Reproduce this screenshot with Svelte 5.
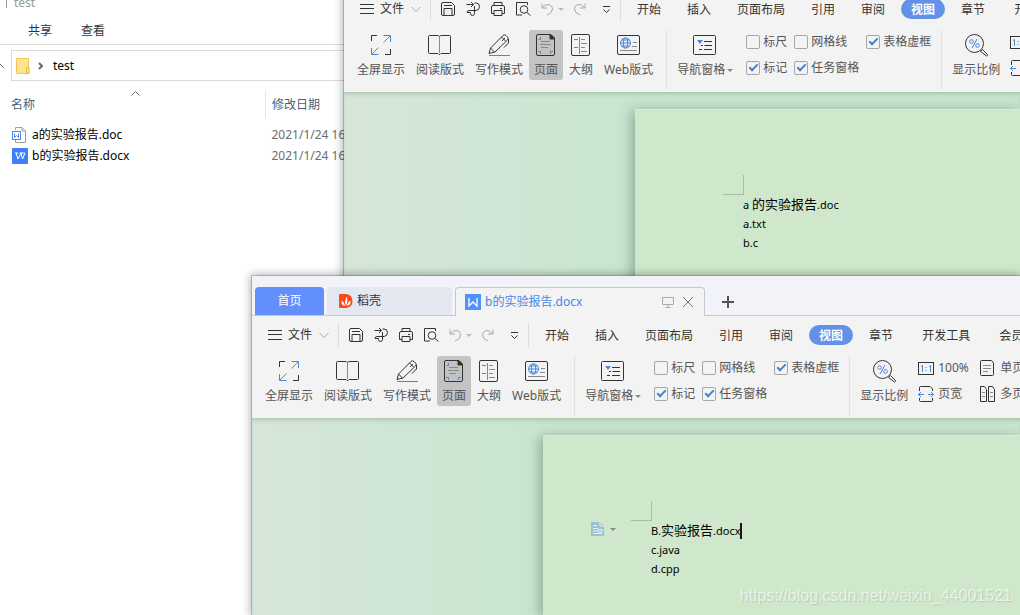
<script lang="ts">
	type Doc = { id: string; left: number; top: number; lines: string[][]; editing: boolean };

	const files = [
		{ name: 'a的实验报告.doc', date: '2021/1/24 16', kind: 'doc' },
		{ name: 'b的实验报告.docx', date: '2021/1/24 16', kind: 'docx' }
	];

	// each line is split into latin / chinese runs: [latin, chinese, latin]
	const docs: Doc[] = [
		{
			id: 'a',
			left: 344,
			top: -50,
			lines: [['a ', '的实验报告', '.doc'], ['a.txt'], ['b.c']],
			editing: false
		},
		{
			id: 'b',
			left: 252,
			top: 276,
			lines: [['B.', '实验报告', '.docx'], ['c.java'], ['d.cpp']],
			editing: true
		}
	];

	const menus = ['开始', '插入', '页面布局', '引用', '审阅', '视图', '章节'];
	const moreMenus = ['开发工具', '会员'];
	const views = [
		{ label: '全屏显示', icon: 'full' },
		{ label: '阅读版式', icon: 'read' },
		{ label: '写作模式', icon: 'write' },
		{ label: '页面', icon: 'page' },
		{ label: '大纲', icon: 'outline' },
		{ label: 'Web版式', icon: 'web' }
	];
	const checks = [
		{ label: '标尺', on: false },
		{ label: '网格线', on: false },
		{ label: '表格虚框', on: true },
		{ label: '标记', on: true },
		{ label: '任务窗格', on: true }
	];
</script>

{#snippet icon(name: string)}
	{#if name === 'full'}
		<svg class="icon" width="24" height="24" viewBox="0 0 24 24">
			<path d="M2.5 8V2.5H8M21.5 16v5.5H16" />
			<path class="blue" d="M14.5 2.5h7V9M21.5 2.5l-7 7M2.5 15v6.5h7M2.5 21.5l7-7" />
		</svg>
	{:else if name === 'read'}
		<svg class="icon" width="24" height="24" viewBox="0 0 24 24">
			<path d="M11 21.500l-1-1H1.500q-1 0-1-1V3.500q0-1 1-1H9q2 0 2.500 1q.500-1 2.500-1h7.500q1 0 1 1v16q0 1-1 1H13l-1 1z" />
			<path class="grey" d="M11.500 4v16" />
		</svg>
	{:else if name === 'write'}
		<svg class="icon" width="24" height="24" viewBox="0 0 24 24">
			<path d="M2 20.500l1.500-5.500L16 2.500q1.500-1.500 3 0l1.500 1.500q1.500 1.500 0 3L8 19zM3.500 15l4 4M14.500 4l4 4M21.500 6v4l-4.500 4.500M18 5l-3 3" />
			<path class="blue" d="M2 22.500h21" />
		</svg>
	{:else if name === 'page'}
		<svg class="icon" width="24" height="24" viewBox="0 0 24 24">
			<path d="M17 1.500H4q-1.500 0-1.500 1.500v18q0 1.500 1.500 1.500h15q1.500 0 1.500-1.500V5z" />
			<path class="solid" d="M16 1l5 5h-5z" />
			<path class="grey" d="M7 8.500h9M6 11.500h11M7 14.500h7" />
			<path class="blue" d="M4.500 6.500h2V4M4 18.500h2.500V21M19 18.500h-2.500V21" />
		</svg>
	{:else if name === 'outline'}
		<svg class="icon" width="24" height="24" viewBox="0 0 24 24">
			<rect x="2.500" y="1.500" width="18" height="21" rx="1.500" />
			<path class="grey" d="M10.500 4v17M12 6.500h4M12 10.500h6M12 14.500h4M12 18.500h6" />
			<path class="blue" d="M5 6.500h4M5 14.500h4" />
		</svg>
	{:else if name === 'web'}
		<svg class="icon" width="24" height="24" viewBox="0 0 24 24">
			<rect x="0.500" y="2.500" width="22" height="19" rx="1.500" />
			<circle class="blue" cx="8.500" cy="10" r="5" />
			<ellipse class="blue" cx="8.500" cy="10" rx="2.200" ry="5" />
			<path class="blue" d="M3.500 10h10M4.500 7h8M4.500 13h8" />
			<path class="grey" d="M16 9.500h4M15 13.500h5M3 17.500h17" />
		</svg>
	{:else if name === 'nav'}
		<svg class="icon" width="24" height="24" viewBox="0 0 24 24">
			<rect x="0.500" y="2.500" width="22" height="19" rx="1" />
			<path class="blue-fill" d="M4 7h6l-3 4z" />
			<path d="M11 8.500h8M8 12.500h2M11.500 12.500H19M6 16.500h3M11 16.500h8" />
		</svg>
	{:else if name === 'zoom'}
		<svg class="icon" width="24" height="24" viewBox="0 0 24 24">
			<circle cx="10.500" cy="10.500" r="9" />
			<path d="M16.500 18.500l2-2 5 5q0 1.500-1 1.500z" />
			<circle class="blue" cx="7.500" cy="8.500" r="1.800" />
			<circle class="blue" cx="13.500" cy="12.500" r="1.800" />
			<path class="blue" d="M13 6l-5 9" />
		</svg>
	{:else if name === 'menu'}
		<svg class="icon" width="16" height="16" viewBox="0 0 16 16"><path d="M1 3.500h14M1 7.500h14M1 12.500h14" /></svg>
	{:else if name === 'chevron'}
		<svg class="icon pale" width="10" height="16" viewBox="0 0 10 16"><path d="M.500 6L5 10.500 9.500 6" /></svg>
	{:else if name === 'save'}
		<svg class="icon" width="16" height="16" viewBox="0 0 16 16">
			<path d="M11.500 1.500H3Q1.500 1.500 1.500 3v10q0 1.500 1.500 1.500h10q1.500 0 1.500-1.500V4.500zM4 14V7.500h8V14M4 4.500h8" />
		</svg>
	{:else if name === 'export'}
		<svg class="icon" width="16" height="16" viewBox="0 0 16 16">
			<path d="M1.500 3.500h7M6 1l2.500 2.500L6 6M9.500 2H11q3.500 0 3.500 3.500T11 9.500H4q-2 0-2 2h3.500v1q0 2 2 2T9.500 12.500V5" />
		</svg>
	{:else if name === 'print'}
		<svg class="icon" width="16" height="16" viewBox="0 0 16 16">
			<path d="M4 4.500v-3h8v3M4 12.500H1.500V6q0-1.500 1.500-1.500h10q1.500 0 1.500 1.500v6.500H12M4 9.500h8v5H4zM10 7.500h2" />
		</svg>
	{:else if name === 'preview'}
		<svg class="icon" width="16" height="16" viewBox="0 0 16 16">
			<path d="M12.500 4V1.500H1.500v12.500H7" />
			<circle cx="9" cy="8.500" r="3.800" />
			<path d="M12 11.500l3.500 3" />
		</svg>
	{:else if name === 'undo'}
		<svg class="icon pale" width="14" height="16" viewBox="0 0 14 16">
			<path d="M2 2.500v4.500h5M2 7q3-4 7-3.500 3.500 1 3.500 4.500 0 4-5.500 6" />
		</svg>
	{:else if name === 'redo'}
		<svg class="icon pale" width="14" height="16" viewBox="0 0 14 16">
			<path d="M12 2.500v4.500H7M12 7Q9 3 5 3.500 1.500 4.500 1.500 8q0 4 5.500 6" />
		</svg>
	{:else if name === 'more'}
		<svg class="icon" width="10" height="16" viewBox="0 0 10 16"><path d="M1 5.500h7M1.500 8.500l3 3 3-3" /></svg>
	{:else if name === 'ratio'}
		<svg class="icon" width="16" height="16" viewBox="0 0 16 16">
			<rect x="0.500" y="2.500" width="15" height="12" />
			<path class="blue" d="M3 6.500l1.500-1V12M11 6.500l1.500-1V12M8 7v1M8 10v1" />
		</svg>
	{:else if name === 'width'}
		<svg class="icon" width="16" height="16" viewBox="0 0 16 16">
			<path d="M1.500 5V1.500q0-1 1-1H12l2.500 2.500V5M1.500 12v2.500q0 1 1 1h11q1 0 1-1V12" />
			<path class="blue" d="M0 8.500h6M3 6L.500 8.500 3 11M16 8.500h-6M13 6l2.500 2.500L13 11" />
		</svg>
	{:else if name === 'single'}
		<svg class="icon" width="16" height="16" viewBox="0 0 16 16">
			<path d="M11.500.500h-10q-1 0-1 1v13q0 1 1 1h11q1 0 1-1V3z" />
			<path class="grey" d="M3 5.500h8M3 8.500h8M3 11.500h5" />
		</svg>
	{:else if name === 'multi'}
		<svg class="icon" width="16" height="16" viewBox="0 0 16 16">
			<path d="M4.500.500h-4v15h6v-12zM12.500.500h-4v15h6v-12z" />
			<path class="grey" d="M2 6.500h3M2 10.500h3M10 6.500h3M10 10.500h3" />
		</svg>
	{/if}
{/snippet}

<main class="desktop">
	<section class="explorer">
		<header class="title">test</header>
		<nav class="explorer-tabs">
			<a href="#share">共享</a>
			<a href="#view">查看</a>
		</nav>
		<div class="address-row">
			<svg class="up" width="5" height="16" viewBox="0 0 5 16"><path d="M-3 9l3-3 3.500 3.500" /></svg>
			<div class="address">
				<svg width="14" height="18" viewBox="0 0 14 18">
					<path d="M.500 1.500h12v15H.500z" fill="#ffe391" stroke="#edc854" />
					<path d="M10.500 10.500h2.500v6h-2.500z" fill="#ffe391" stroke="#e3b93c" />
				</svg>
				<svg class="crumb" width="6" height="10" viewBox="0 0 6 10"><path d="M1 2l3 3-3 3" /></svg>
				<span>test</span>
			</div>
		</div>
		<table class="files">
			<thead>
				<tr>
					<th class="name">
						名称
						<svg class="sort" width="9" height="5" viewBox="0 0 9 5"><path d="M.500 4.500l4-4 4 4" /></svg>
					</th>
					<th class="date">修改日期</th>
				</tr>
			</thead>
			<tbody>
				{#each files as file}
					<tr>
						<td class="name">
							<div class="file">
								{#if file.kind === 'doc'}
									<svg width="16" height="16" viewBox="0 0 16 16">
										<path d="M3.500 3V.500H10l3.500 3.500v11.500h-10V13M10 .500V4h3.500" fill="#fff" stroke="#a0a0a0" />
										<rect x=".500" y="4.500" width="8" height="8" fill="#fff" stroke="#4c86f5" />
										<path d="M2.500 6.500v4l2-2 2 2v-4" fill="none" stroke="#4c86f5" />
									</svg>
								{:else}
									<svg width="16" height="16" viewBox="0 0 16 16">
										<rect width="16" height="16" rx="1" fill="#417ff9" />
										<path d="M3 5h3M4 5l2 6 3-6 1.500 6L13 5H7.500" fill="none" stroke="#fff" />
									</svg>
								{/if}
								{file.name}
							</div>
						</td>
						<td class="date">{file.date}</td>
					</tr>
				{/each}
			</tbody>
		</table>
	</section>

	{#each docs as doc (doc.id)}
		<section class="window" style="left: {doc.left}px; top: {doc.top}px">
			<div class="tabs">
				<button class="tab home">首页</button>
				<button class="tab docer">
					<svg width="14" height="16" viewBox="0 0 14 16">
						<path d="M1 1h6q6.500 1 6.500 7T7 15H1q-1 0-1-1V2q0-1 1-1z" fill="#fb4a12" />
						<path d="M7 13Q5 9 7.500 3.500 9.500 7 7 13M6 13Q2 12 2.500 7.500 5 9 6 13M8 13q.500-4 3.500-5.500Q12 12 8 13" fill="#fff" />
					</svg>
					稻壳
				</button>
				<div class="tab current">
					<svg width="16" height="16" viewBox="0 0 16 16">
						<rect width="16" height="16" fill="#4f93f8" />
						<path d="M4 4v8l4-4 4 4V4" fill="none" stroke="#fff" stroke-width="1.300" />
					</svg>
					<span>{doc.id}的实验报告{doc.id === 'a' ? '.doc' : '.docx'}</span>
					<svg class="line" width="12" height="12" viewBox="0 0 12 12"><path d="M.500 1.500h11v7H.500zM6 9v2.500M3.500 11.500h5" /></svg>
					<button class="plain" aria-label="关闭">
						<svg class="line dark" width="12" height="12" viewBox="0 0 12 12"><path d="M1 1l10 10M11 1L1 11" /></svg>
					</button>
				</div>
				<button class="plain add" aria-label="新建">
					<svg width="12" height="12" viewBox="0 0 12 12"><path d="M6 0v12M0 6h12" stroke="#555" stroke-width="2" /></svg>
				</button>
			</div>

			<nav class="menubar">
				<button class="plain file-menu">{@render icon('menu')}<span>文件</span>{@render icon('chevron')}</button>
				<div class="quick">
					{#each ['save', 'export', 'print', 'preview'] as name}
						<button class="plain" aria-label={name}>{@render icon(name)}</button>
					{/each}
					<button class="plain undo" aria-label="撤销">{@render icon('undo')}<i class="caret light"></i></button>
					<button class="plain" aria-label="恢复">{@render icon('redo')}</button>
					<button class="plain more" aria-label="更多">{@render icon('more')}</button>
				</div>
				<div class="menus">
					{#each menus as item}
						<button class="menu" class:active={item === '视图'}>{item}</button>
					{/each}
				</div>
				<div class="menus extra">
					{#each moreMenus as item}
						<button class="menu">{item}</button>
					{/each}
				</div>
			</nav>

			<div class="ribbon">
				<div class="group views">
					{#each views as view}
						<button class="tool" class:pressed={view.icon === 'page'}>
							{@render icon(view.icon)}
							<span>{view.label}</span>
						</button>
					{/each}
				</div>
				<div class="group panes">
					<button class="tool">
						{@render icon('nav')}
						<span class="drop">导航窗格<i class="caret"></i></span>
					</button>
					<div class="checks">
						{#each checks as check}
							<label><input type="checkbox" checked={check.on} />{check.label}</label>
						{/each}
					</div>
				</div>
				<div class="group zooming">
					<button class="tool">{@render icon('zoom')}<span>显示比例</span></button>
					<div class="pairs">
						<button class="plain">{@render icon('ratio')}100%</button>
						<button class="plain">{@render icon('single')}单页</button>
						<button class="plain">{@render icon('width')}页宽</button>
						<button class="plain">{@render icon('multi')}多页</button>
					</div>
				</div>
			</div>

			<div class="canvas">
				<article class="paper">
					<div class="corner"></div>
					<div class="text">
						{#each doc.lines as line, i}
							<p>
								{#each line as run, j}{#if j === 1}<span class="cjk">{run}</span>{:else}<span>{run}</span>{/if}{/each}{#if doc.editing && i === 0}<i class="cursor"></i>{/if}
							</p>
						{/each}
					</div>
					{#if doc.editing}
						<button class="plain float" aria-label="段落布局">
							<svg width="14" height="14" viewBox="0 0 14 14">
								<path d="M0 0h9l4 4v10H0z" fill="#9fc1cf" />
								<path d="M9 0v4h4M2 3.500h4M2 6.500h5M2 11.500h9M2 9h5M7.500 7.500h3.500v2.500H7.500z" stroke="#e6f4ea" fill="none" />
							</svg>
							<i class="caret"></i>
						</button>
					{/if}
				</article>
			</div>
		</section>
	{/each}

	<div class="watermark">https://blog.csdn.net/weixin_44001521</div>
</main>

<style>
	:global(body) {
		margin: 0;
		overflow: hidden;
	}

	.desktop {
		position: relative;
		height: 100vh;
		overflow: hidden;
		background: #fff;
		color: #000;
		font: 12px/18px 'Noto Sans', 'Noto Sans CJK SC', sans-serif;
	}

	button {
		font: inherit;
		color: inherit;
		border: 0;
		padding: 0;
		background: none;
		white-space: nowrap;
	}

	svg { display: block; flex: none; }

	.plain {
		display: flex;
		align-items: center;
	}

	/* file explorer */
	.title {
		height: 8px;
		margin-left: 6px;
		padding-left: 7px;
		border-left: 1px solid #999;
		line-height: 6px;
		color: #999;
	}

	.explorer-tabs {
		display: flex;
		gap: 29px;
		height: 36px;
		padding-left: 28px;
		line-height: 46px;
		border-bottom: 1px solid #dcdcdc;
	}

	.explorer-tabs a {
		color: #333;
		text-decoration: none;
	}

	.address-row {
		display: flex;
		align-items: center;
		gap: 6px;
		margin-top: 5px;
	}

	.up, .crumb, .sort { fill: none; stroke: #666; }
	.crumb { stroke-width: 2; }

	.address {
		flex: 1;
		display: flex;
		align-items: center;
		height: 29px;
		padding-left: 4px;
		border: 1px solid #d9d9d9;
		line-height: 16px;
	}

	.address .crumb { margin: 0 9px 0 8px; }

	.files {
		margin: 10px 0 0 11px;
		border-collapse: collapse;
		table-layout: fixed;
		width: 400px;
	}

	th, td {
		padding: 0;
		font-weight: 400;
		text-align: left;
		white-space: nowrap;
	}

	th {
		height: 27px;
		color: #4c607a;
	}

	th.name {
		position: relative;
		width: 254px;
		border-right: 1px solid #e5e5e5;
	}

	.sort {
		position: absolute;
		top: 0;
		left: 120px;
	}

	.date { padding-left: 6px; }
	td { height: 21px; }
	td.date { color: #6d6d6d; }
	tbody tr:first-child td { padding-top: 6px; }

	.file {
		display: flex;
		align-items: center;
		gap: 4px;
		padding-left: 1px;
	}

	/* editor windows */
	.window {
		position: absolute;
		right: 0;
		bottom: 0;
		display: flex;
		flex-direction: column;
		overflow: hidden;
		background: #f3f3f3;
		color: #333;
		box-shadow: 0 0 0 1px rgba(90, 90, 90, 0.3), 0 0 9px 1px rgba(0, 0, 0, 0.35);
	}

	.tabs {
		flex: none;
		display: flex;
		align-items: flex-end;
		gap: 3px;
		height: 39px;
		padding-left: 3px;
		background: #f1f3f9;
		border-bottom: 1px solid #c2c8da;
	}

	.tab {
		display: flex;
		align-items: center;
		height: 28px;
		border-radius: 4px 4px 0 0;
		line-height: 30px;
	}

	.home {
		justify-content: center;
		width: 69px;
		background: #628ffc;
		color: #fff;
	}

	.docer {
		gap: 4px;
		width: 125px;
		padding-left: 12px;
		background: #e3e7f0;
	}

	.current {
		box-sizing: border-box;
		gap: 4px;
		width: 250px;
		height: 29px;
		padding: 0 10px 0 9px;
		margin-bottom: -1px;
		border: 1px solid #c2c8da;
		border-bottom: 0;
		background: #f3f3f3;
		color: #4a86e8;
	}

	.current span { flex: 1; }
	.current button { margin-left: 4px; }
	.line { fill: none; stroke: #aaa; }
	.dark { stroke: #777; }
	.add { height: 27px; padding-left: 14px; }

	.menubar {
		flex: none;
		display: flex;
		align-items: center;
		height: 38px;
		padding-left: 15px;
	}

	.file-menu { gap: 5px; padding-right: 9px; }
	.file-menu span { margin-right: 2px; }

	.quick {
		display: flex;
		gap: 9px;
		height: 24px;
		padding: 0 8px 0 9px;
		border: solid #dedede;
		border-width: 0 1px;
	}

	.undo { gap: 4px; }
	.more { margin-left: 6px; }

	.menus {
		display: flex;
		gap: 6px;
		padding-left: 6px;
	}

	.extra { gap: 9px; padding-left: 9px; }

	.menu {
		height: 20px;
		padding: 0 10px;
		border-radius: 10px;
		line-height: 22px;
	}

	.active {
		background: #6192e8;
		color: #fff;
		font-weight: 700;
	}

	.icon {
		fill: none;
		stroke: #333;
	}

	.icon .blue { stroke: #4a86dc; }
	.icon .grey { stroke: #888; }
	.icon .solid { fill: #333; }
	.icon .blue-fill { fill: #4a86dc; stroke: none; }
	.icon.pale { stroke: #aaa; }

	.caret {
		width: 0;
		height: 0;
		border: 3px solid transparent;
		border-top-color: #888;
		border-bottom: 0;
	}

	.light { border-top-color: #bbb; }

	.ribbon {
		flex: none;
		display: flex;
		height: 62px;
		padding: 2px 0 0 8px;
		color: #555;
	}

	.group {
		flex: none;
		display: flex;
		align-items: flex-start;
		gap: 1px;
		height: 60px;
	}

	.views, .panes { border-right: 1px solid #e0e0e0; }
	.views { padding-right: 8px; }
	.panes { gap: 8px; padding: 0 10px 0 5px; }
	.zooming { gap: 5px; padding-left: 5px; }

	.tool {
		display: flex;
		flex-direction: column;
		align-items: center;
		gap: 4px;
		height: 50px;
		padding: 3px 5px 1px;
		border-radius: 3px;
	}

	.pressed { background: #c3c3c3; }

	.drop {
		display: flex;
		align-items: center;
		gap: 2px;
	}

	.checks {
		display: grid;
		grid-template-columns: 48px 72px auto;
		row-gap: 2px;
	}

	.checks label {
		display: flex;
		align-items: center;
		gap: 3px;
		height: 24px;
	}

	input {
		appearance: none;
		display: grid;
		place-items: center;
		width: 14px;
		height: 14px;
		margin: 0;
		border: 1px solid #a6a6a6;
		border-radius: 2px;
	}

	input:checked::after {
		content: '';
		width: 7px;
		height: 3px;
		margin-bottom: 3px;
		border: solid #4a7fd0;
		border-width: 0 0 2px 2px;
		transform: rotate(-45deg);
	}

	.pairs {
		display: grid;
		grid-template-columns: 62px auto;
		row-gap: 2px;
	}

	.pairs button {
		gap: 4px;
		height: 24px;
		line-height: 20px;
	}

	.canvas {
		flex: 1;
		padding: 17px 0 0 291px;
		background: linear-gradient(90deg, #d6e6da, #c9e6cf 290px);
		box-shadow: inset 0 4px 5px -3px rgba(60, 100, 70, 0.35);
	}

	.paper {
		position: relative;
		box-sizing: border-box;
		height: 100%;
		padding: 65px 0 0 88px;
		border-top: 1px solid #dcecd8;
		background: #cfe8cb;
		box-shadow: -3px 2px 12px rgba(60, 95, 70, 0.45);
	}

	.corner {
		width: 20px;
		height: 19px;
		border: solid #a6bda3;
		border-width: 0 1px 1px 0;
	}

	.text {
		padding-left: 20px;
		color: #000;
		font-size: 11px;
		line-height: 19px;
	}

	.text p {
		display: flex;
		align-items: center;
		height: 19px;
		margin: 0;
		white-space: pre;
	}

	.cjk { font-size: 13px; }

	.cursor {
		width: 2px;
		height: 16px;
		background: #201020;
	}

	.float {
		position: absolute;
		top: 86px;
		left: 48px;
		gap: 5px;
	}

	.watermark {
		position: absolute;
		right: 8px;
		bottom: 8px;
		color: rgba(255, 255, 255, 0.65);
		font: 16px/22px 'Liberation Sans', sans-serif;
		text-shadow: 1px 1px 1px rgba(120, 140, 120, 0.3);
	}
</style>
